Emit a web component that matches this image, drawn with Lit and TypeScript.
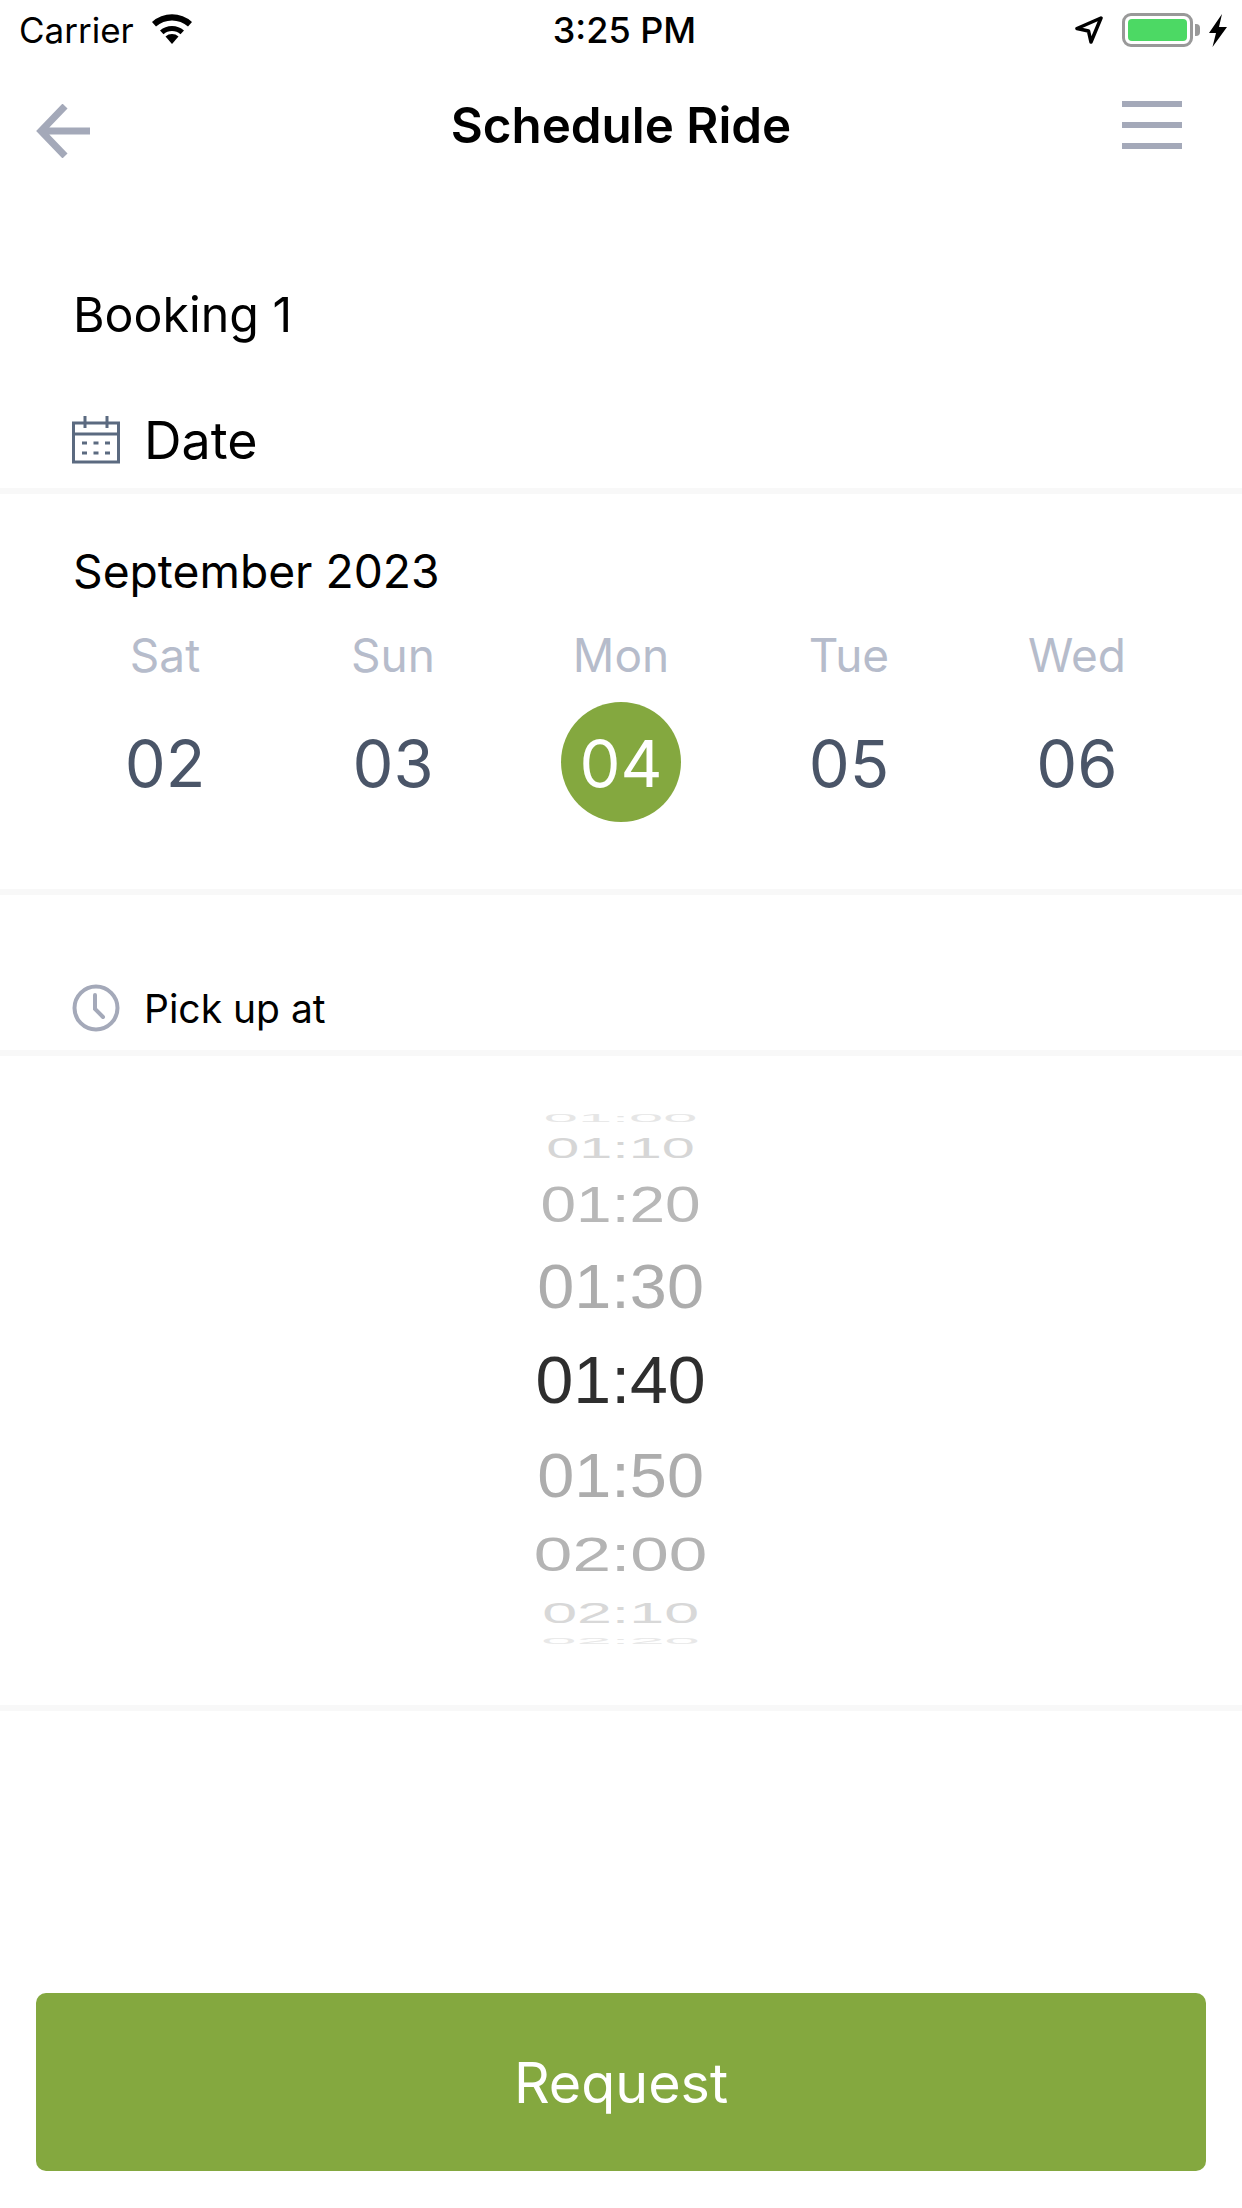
import { LitElement, html, css } from "lit";
import { customElement } from "lit/decorators.js";

const DAYS = [
  { n: "Sat", d: "02" },
  { n: "Sun", d: "03" },
  { n: "Mon", d: "04", on: true },
  { n: "Tue", d: "05" },
  { n: "Wed", d: "06" },
];

// h: row height, sy/sx: perspective squash of the wheel, c: ink colour
const WHEEL = [
  { t: "01:00", h: 20, sy: 0.17, sx: 0.93, c: "#e6e6e6" },
  { t: "01:10", h: 38, sy: 0.46, sx: 0.9, c: "#d6d6d6" },
  { t: "01:20", h: 78, sy: 0.76, sx: 0.97, c: "#b8b8b8" },
  { t: "01:30", h: 84, sy: 0.96, sx: 1.01, c: "#adadad" },
  { t: "01:40", h: 104, sy: 1, sx: 1.03, c: "#2e2e2e" },
  { t: "01:50", h: 85, sy: 0.95, sx: 1.01, c: "#adadad" },
  { t: "02:00", h: 73, sy: 0.74, sx: 1.05, c: "#b4b4b4" },
  { t: "02:10", h: 45, sy: 0.44, sx: 0.95, c: "#d8d8d8" },
  { t: "02:20", h: 12, sy: 0.13, sx: 0.96, c: "#e8e8e8" },
];

@customElement("app-root")
export class AppRoot extends LitElement {
  static styles = css`
    :host {
      display: block;
      width: 1242px;
      height: 2208px;
      background: #fff;
      font-family: Inter, "Liberation Sans", sans-serif;
      color: #000;
      overflow: hidden;
    }
    .page { display: flex; flex-direction: column; height: 2208px; }

    .status {
      height: 60px;
      display: grid;
      grid-template-columns: 1fr auto 1fr;
      align-items: center;
      padding: 0 15px 0 19px;
      font-size: 36px;
      flex: none;
    }
    .status .left { display: flex; align-items: center; gap: 17px; font-size: 35px; }
    .status .left svg { margin-top: -2px; }
    .status .time { font-weight: 500; padding-left: 3px; }
    .status .right { display: flex; align-items: center; justify-content: flex-end; }
    .arrow { margin-right: 19px; }
    .battery {
      width: 71px;
      height: 34px;
      box-sizing: border-box;
      border: 3px solid #999;
      border-radius: 9px;
      padding: 3px;
      display: flex;
    }
    .battery i { flex: 1; background: #4cd964; border-radius: 4px; }
    .nub { width: 5px; height: 12px; background: #999; border-radius: 0 4px 4px 0; margin: 0 9px 0 2px; }

    .nav {
      height: 130px;
      flex: none;
      display: grid;
      grid-template-columns: 1fr auto 1fr;
      align-items: center;
      margin-bottom: 60px;
      padding: 0 60px 0 36px;
    }
    .nav h1 { margin: 0; font: 600 49.3px Inter, sans-serif; position: relative; left: 12px; }
    .nav .back { margin-top: 11px; display: block; }
    .nav .menu { justify-self: end; display: block; }

    .booking { flex: none; height: 128px; padding-left: 73px; display: flex; align-items: center; font-size: 48.3px; }
    .date { flex: none; height: 110px; padding: 14px 0 0 72px; display: flex; align-items: center; gap: 24px; font-size: 52px; box-sizing: border-box; }
    .rule { flex: none; height: 6px; background: #f8f8f8; }

    .month { flex: none; padding: 50px 0 0 73px; font-size: 46.200px; line-height: 54px; }
    .days { flex: none; display: grid; grid-template-columns: repeat(5, 228px); padding: 30px 0 0 51px; height: 291px; box-sizing: border-box; }
    .day { display: flex; flex-direction: column; align-items: center; }
    .day .n { font-size: 46px; line-height: 54px; color: #b6bccb; }
    .day .d {
      width: 120px; height: 120px; margin-top: 20px; border-radius: 50%;
      display: flex; align-items: center; justify-content: center;
      box-sizing: border-box; padding-top: 2px;
      font-size: 65px; font-weight: 400; color: #4a5568;
    }
    .day.on .d { background: #84a83f; color: #fff; }

    .pick { flex: none; height: 155px; box-sizing: border-box; padding: 0 0 0 72px; display: flex; align-items: flex-end; }
    .pick div { display: flex; align-items: center; gap: 24px; font-size: 39px; height: 60px; margin-bottom: 12px; }

    .wheel { flex: none; padding-top: 52px; height: 649px; box-sizing: border-box; display: flex; flex-direction: column; align-items: center; }
    .wheel div { display: flex; align-items: center; justify-content: center; font: 66px/1 "Liberation Sans", sans-serif; flex: none; }
    .wheel span { display: block; }

    .spacer { flex: 1; }
    .cta {
      flex: none;
      margin: 0 36px 37px 36px;
      height: 178px;
      border-radius: 10px;
      background: #84a83f;
      color: #fff;
      font-size: 55.6px;
      display: flex;
      align-items: center;
      justify-content: center;
    }
  `;

  render() {
    return html`<div class="page">
      <div class="status">
        <div class="left">
          <span>Carrier</span>
          <svg width="42" height="30" viewBox="0 0 42 30">
            <path d="M21 30 14.500 22.500a10 10 0 0 1 13 0Z" fill="#000"/>
            <path d="M9 16.500a18 18 0 0 1 24 0l-3.500 3.700a13 13 0 0 0-17 0Z" fill="#000"/>
            <path d="M1 8a30 30 0 0 1 40 0l-4 4.500a24 24 0 0 0-32 0Z" fill="#000"/>
          </svg>
        </div>
        <span class="time">3:25 PM</span>
        <div class="right">
          <svg class="arrow" width="28" height="28" viewBox="0 0 28 28">
            <path d="M26 2 2 12.500 13.500 15 16 26Z" fill="none" stroke="#000" stroke-width="3.500" stroke-linejoin="round"/>
          </svg>
          <div class="battery"><i></i></div>
          <div class="nub"></div>
          <svg width="18" height="33" viewBox="0 0 18 33"><path d="M13 0 0 19h7L3.500 33 18 13h-8Z" fill="#000"/></svg>
        </div>
      </div>

      <div class="nav">
        <svg class="back" width="54" height="54" viewBox="0 0 54 54">
          <path d="M54 27H5M29 2 5 27l24 25" fill="none" stroke="#a4a9b9" stroke-width="7"/>
        </svg>
        <h1>Schedule Ride</h1>
        <svg class="menu" width="60" height="48" viewBox="0 0 60 48">
          <path d="M0 3h60M0 24h60M0 45h60" stroke="#a4a9b9" stroke-width="6"/>
        </svg>
      </div>

      <div class="booking">Booking 1</div>
      <div class="date">
        <svg width="48" height="48" viewBox="0 0 48 48" fill="none" stroke="#5b6a80" stroke-width="3">
          <rect x="1.500" y="7" width="45" height="39"/>
          <path d="M1.500 18h45M13 0v12M35 0v12"/>
          <path d="M10 27h5M21.500 27h5M33 27h5M10 37h5M21.500 37h5M33 37h5"/>
        </svg>
        <span>Date</span>
      </div>
      <div class="rule"></div>

      <div class="month">September 2023</div>
      <div class="days">
        ${DAYS.map(
          (x) => html`<div class="day ${x.on ? "on" : ""}">
            <span class="n">${x.n}</span><span class="d">${x.d}</span>
          </div>`
        )}
      </div>
      <div class="rule"></div>

      <div class="pick">
        <div>
          <svg width="48" height="48" viewBox="0 0 48 48" fill="none" stroke="#a4a9b9" stroke-width="4" stroke-linecap="round">
            <circle cx="24" cy="24" r="21.500"/>
            <path d="M23 11v14l8 8"/>
          </svg>
          <span>Pick up at</span>
        </div>
      </div>
      <div class="rule"></div>

      <div class="wheel">
        ${WHEEL.map(
          (r) => html`<div style="height:${r.h}px;color:${r.c}">
            <span style="transform:scale(${r.sx},${r.sy})">${r.t}</span>
          </div>`
        )}
      </div>
      <div class="rule"></div>

      <div class="spacer"></div>
      <div class="cta">Request</div>
    </div>`;
  }
}
